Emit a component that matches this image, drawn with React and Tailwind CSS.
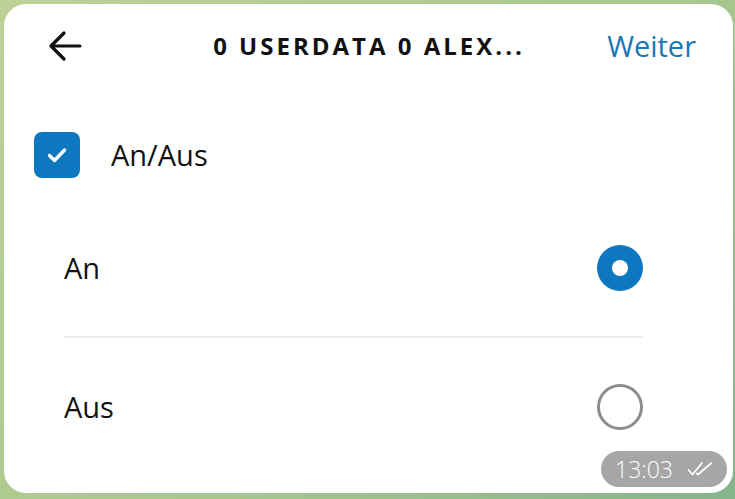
import React, { useState } from "react";

const font = { fontFamily: '"Open Sans", "Noto Sans", Arial, sans-serif' };

function BackArrow() {
  return (
    <svg width="34" height="32" viewBox="0 0 34 32" fill="none">
      <path
        d="M32 16H4M16 3L3 16l13 13"
        stroke="#111"
        strokeWidth="3.2"
        strokeLinecap="round"
        strokeLinejoin="round"
      />
    </svg>
  );
}

function Radio({ checked }) {
  if (checked) {
    return (
      <div className="flex h-[46px] w-[46px] items-center justify-center rounded-full bg-[#0d78bf]">
        <div className="h-[16px] w-[16px] rounded-full bg-white" />
      </div>
    );
  }
  return <div className="h-[46px] w-[46px] rounded-full border-[3px] border-[#8c8c8c]" />;
}

export default function App() {
  const [value, setValue] = useState("an");

  return (
    <div
      className="h-[499px] w-[735px] bg-[linear-gradient(135deg,#bcd196_0%,#a9c88e_55%,#86b48b_100%)] pb-[6px] pl-[4px] pr-[2px] pt-[4px]"
      style={font}
    >
      <div className="flex h-full flex-col rounded-[22px] bg-white">
        <div className="grid h-[84px] grid-cols-[1fr_auto_1fr] items-center pl-[44px] pr-[37px]">
          <button type="button" className="justify-self-start">
            <BackArrow />
          </button>
          <div className="pr-[6px] text-[24px] font-bold tracking-[3px] text-[#111]">
            0 USERDATA 0 ALEX...
          </div>
          <div className="justify-self-end text-[29px] text-[#1878b6]">Weiter</div>
        </div>

        <div className="mt-[44px] flex items-center gap-[31px] pl-[30px]">
          <div className="flex h-[46px] w-[46px] items-center justify-center rounded-[8px] bg-[#0d78bf]">
            <svg width="20" height="16" viewBox="0 0 20 16" fill="none">
              <path
                d="M2.5 8.5l5 5L17.5 3"
                stroke="#fff"
                strokeWidth="3.4"
                strokeLinecap="round"
                strokeLinejoin="round"
              />
            </svg>
          </div>
          <span className="text-[29px] text-[#111]">An/Aus</span>
        </div>

        <div className="mt-[67px] pl-[60px] pr-[90px]">
          <button
            type="button"
            onClick={() => setValue("an")}
            className="flex h-[46px] w-full items-center justify-between"
          >
            <span className="text-[29px] text-[#111]">An</span>
            <Radio checked={value === "an"} />
          </button>
          <div className="mb-[46px] mt-[45px] h-[2px] bg-[#ebebeb]" />
          <button
            type="button"
            onClick={() => setValue("aus")}
            className="flex h-[46px] w-full items-center justify-between"
          >
            <span className="text-[29px] text-[#111]">Aus</span>
            <Radio checked={value === "aus"} />
          </button>
        </div>

        <div className="mt-auto flex justify-end pb-[6px] pr-[6px]">
          <div className="flex h-[36px] items-center gap-[14px] rounded-full bg-[#a6a6a6] pl-[14px] pr-[14px] text-white">
            <span className="text-[23px] font-light">13:03</span>
            <svg width="26" height="16" viewBox="0 0 26 16" fill="none">
              <path
                d="M1.5 9l4 4.5L15 2M10 12.5l1 1L24.5 2"
                stroke="#fff"
                strokeWidth="1.8"
                strokeLinecap="round"
                strokeLinejoin="round"
              />
            </svg>
          </div>
        </div>
      </div>
    </div>
  );
}
